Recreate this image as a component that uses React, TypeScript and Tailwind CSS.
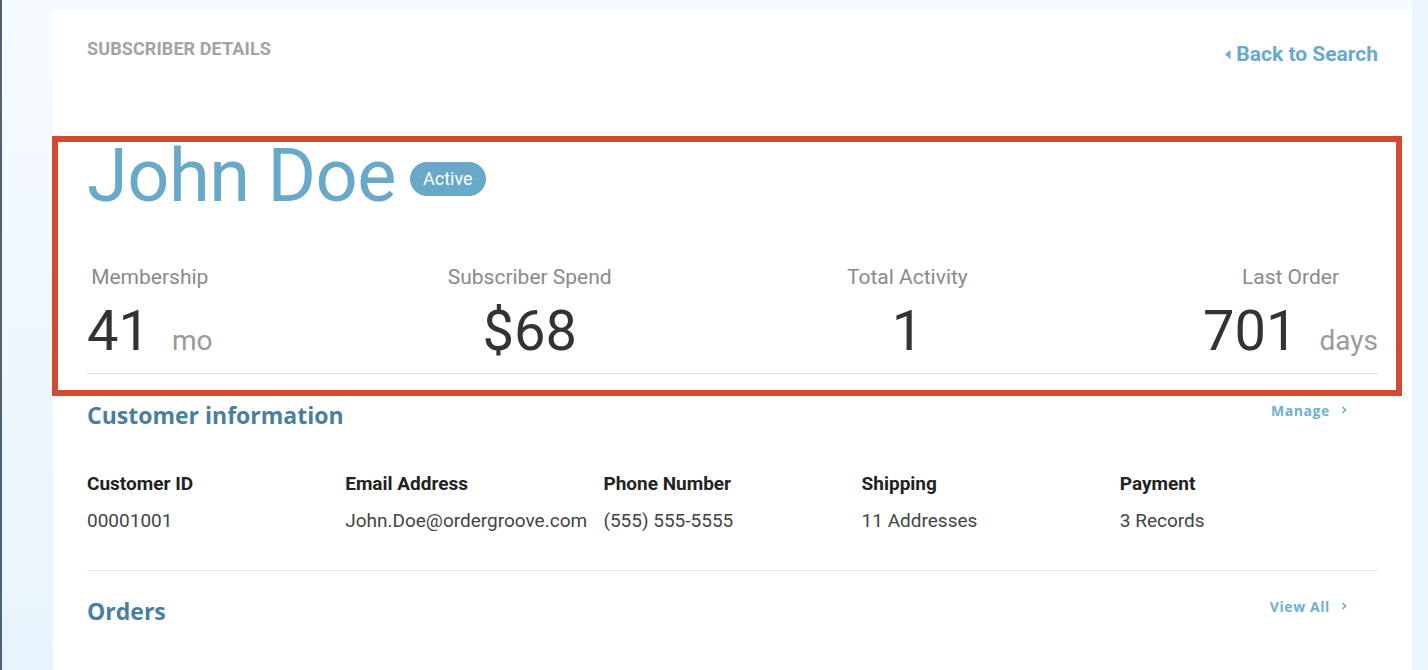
import React from "react";

function Stat({ label, value, unit }: { label: string; value: string; unit?: string }) {
  return (
    <div className="flex flex-col items-center">
      <div className="text-[21px] leading-[26px] font-normal text-[#8a8a8a]">{label}</div>
      <div className="mt-[11px] flex items-baseline leading-[60px]">
        <span className="text-[56px] font-normal text-[#333333]">{value}</span>
        {unit && <span className="ml-[22px] text-[28px] text-[#9a9a9a]">{unit}</span>}
      </div>
    </div>
  );
}

function Chevron() {
  return (
    <svg width="8" height="10" viewBox="0 0 8 10" className="ml-[10px]">
      <path d="M2.5 2 L5.5 5 L2.5 8" fill="none" stroke="#6aaed0" strokeWidth="1.6" />
    </svg>
  );
}

export default function App() {
  const cols = [
    ["Customer ID", "00001001"],
    ["Email Address", "John.Doe@ordergroove.com"],
    ["Phone Number", "(555) 555-5555"],
    ["Shipping", "11 Addresses"],
    ["Payment", "3 Records"],
  ];
  return (
    <div
      className="relative w-[1428px] h-[670px] overflow-hidden border-l-[2px] border-[#4d6275] bg-gradient-to-b from-[#f6fbff] to-[#e8f4fd]"
      style={{ fontFamily: "Roboto, 'Liberation Sans', sans-serif" }}
    >
      <div className="absolute inset-y-0 right-0 w-[16px] bg-[#eaf5fd]" />
      <div className="ml-[51px] mt-[10px] w-[1359px] h-[700px] bg-white px-[34px] pt-[29px]">
        <div className="flex justify-between items-start">
          <div className="text-[18px] font-bold leading-[20px] tracking-[0.1px] text-[#a3a3a3]">SUBSCRIBER DETAILS</div>
          <div className="mt-[2px] flex items-center text-[21px] font-bold leading-[26px] text-[#68aacb]">
            <svg width="8" height="11" viewBox="0 0 8 11" className="mr-[4px]">
              <path d="M6.5 1 L1 5.5 L6.5 10 Z" fill="#68aacb" />
            </svg>
            Back to Search
          </div>
        </div>

        <div className="mt-[71px] flex items-start">
          <h1 className="text-[74px] leading-[76px] font-normal text-[#68a8c8] tracking-[-0.5px]">John Doe</h1>
          <span className="ml-[14px] mt-[24px] h-[34px] px-[13px] rounded-full bg-[#68a8c8] text-white text-[18px] leading-[34px]">
            Active
          </span>
        </div>

        <div className="mt-[50px] flex justify-between pb-[2px] border-b border-[#dddddd]">
          <Stat label="Membership" value="41" unit="mo" />
          <Stat label="Subscriber Spend" value="$68" />
          <Stat label="Total Activity" value="1" />
          <Stat label="Last Order" value="701" unit="days" />
        </div>

        <div className="mt-[26px] flex justify-between items-center">
          <h2 className="text-[23px] font-bold leading-[30px] text-[#4a7f9c]" style={{ fontFamily: "'Open Sans', sans-serif" }}>
            Customer information
          </h2>
          <div className="mr-[30px] mt-[-10px] flex items-center text-[14px] font-bold tracking-[0.6px] text-[#6eb0d1]" style={{ fontFamily: "'Open Sans', sans-serif" }}>
            Manage
            <Chevron />
          </div>
        </div>

        <div className="mt-[42px] grid grid-cols-5 pb-[37px] border-b border-[#e2e2e2]">
          {cols.map(([h, v]) => (
            <div key={h}>
              <div className="text-[19px] font-bold leading-[24px] text-[#222222]">{h}</div>
              <div className="mt-[13px] text-[19px] leading-[24px] text-[#444444]">{v}</div>
            </div>
          ))}
        </div>

        <div className="mt-[25px] flex justify-between items-center">
          <h2 className="text-[23px] font-bold leading-[30px] text-[#4a7f9c]" style={{ fontFamily: "'Open Sans', sans-serif" }}>
            Orders
          </h2>
          <div className="mr-[30px] mt-[-10px] flex items-center text-[14px] font-bold tracking-[0.6px] text-[#6eb0d1]" style={{ fontFamily: "'Open Sans', sans-serif" }}>
            View All
            <Chevron />
          </div>
        </div>
      </div>

      <div className="pointer-events-none absolute left-[50px] top-[136px] w-[1350px] h-[260px] border-[6px] border-[#d34a33]" />
    </div>
  );
}
